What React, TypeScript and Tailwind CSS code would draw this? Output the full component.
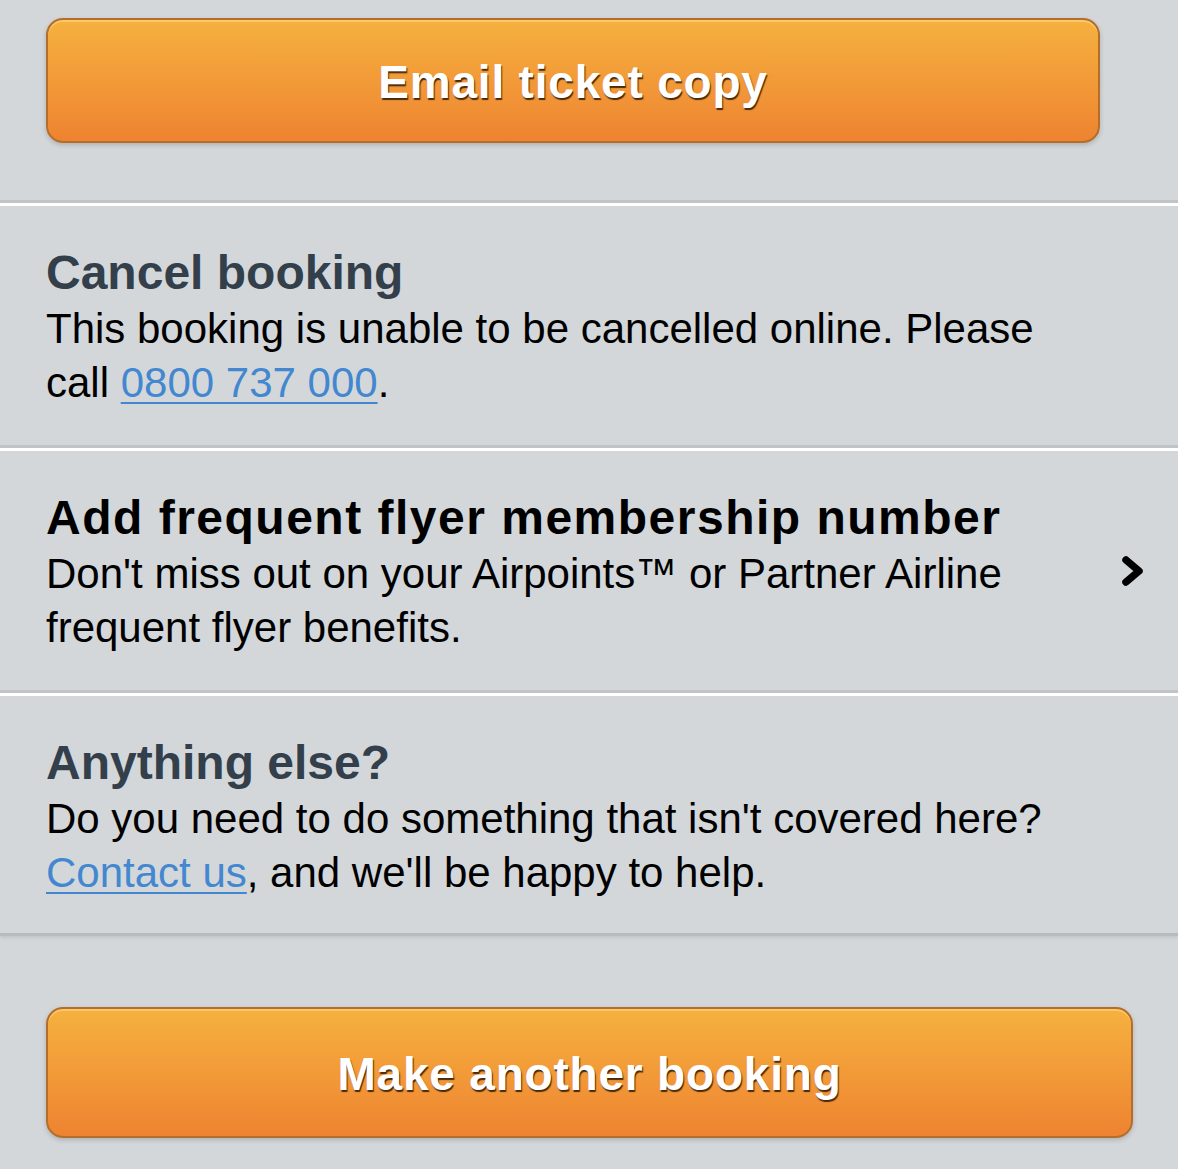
import React from "react";

function OrangeButton({ label, className }: { label: string; className: string }) {
  return (
    <button
      className={`${className} flex items-center justify-center rounded-[17px] border-2 border-[#b46e2b] bg-gradient-to-b from-[#f5b13f] to-[#ee8331] shadow-[inset_0_2px_0_rgba(255,220,140,0.55),0_2px_5px_rgba(0,0,0,0.18)] text-white font-bold text-[46px] tracking-[0.8px] pt-[3px] [text-shadow:1px_2px_1px_rgba(30,15,0,0.8)]`}
    >
      {label}
    </button>
  );
}

export default function App() {
  return (
    <div className="min-h-[1169px] w-full bg-[#d3d7da] font-['Liberation_Sans',Arial,sans-serif] overflow-hidden">
      <div className="h-[203px] pt-[18px] border-b-[3px] border-[#c0c4c7]">
        <OrangeButton label="Email ticket copy" className="ml-[46px] w-[1054px] h-[125px]" />
      </div>

      <section className="border-t-[3px] border-white border-b-[3px] border-b-[#c0c4c7] pt-[38px] pb-[35px] pl-[46px] pr-[90px]">
        <h2 className="text-[48px] leading-[58px] font-bold text-[#333f4a]">Cancel booking</h2>
        <p className="text-[42px] leading-[54px] text-black">
          This booking is unable to be cancelled online. Please call{" "}
          <a href="#" className="text-[#4287cf] underline decoration-[2px] underline-offset-[5px]">0800 737 000</a>.
        </p>
      </section>

      <section className="border-t-[3px] border-white border-b-[3px] border-b-[#c0c4c7] pt-[38px] pb-[35px] pl-[46px] pr-[30px] flex items-center">
        <div className="flex-1">
          <h2 className="text-[48px] leading-[58px] font-bold text-black tracking-[1.5px]">Add frequent flyer membership number</h2>
          <p className="text-[42px] leading-[54px] text-black pr-[80px]">
            Don't miss out on your Airpoints™ or Partner Airline frequent flyer benefits.
          </p>
        </div>
        <svg width="30" height="38" viewBox="0 0 30 38" className="-mt-[3px]">
          <polyline points="8,8 21,19 8,30" fill="none" stroke="#000" strokeWidth="7.5" strokeLinecap="round" strokeLinejoin="round" />
        </svg>
      </section>

      <section className="border-t-[3px] border-white border-b-[3px] border-b-[#b8bcbf] shadow-[0_2px_3px_rgba(0,0,0,0.08)] pt-[38px] pb-[33px] pl-[46px] pr-[90px]">
        <h2 className="text-[48px] leading-[58px] font-bold text-[#333f4a]">Anything else?</h2>
        <p className="text-[42px] leading-[54px] text-black">
          Do you need to do something that isn't covered here?{" "}
          <a href="#" className="text-[#4287cf] underline decoration-[2px] underline-offset-[5px]">Contact us</a>, and we'll be happy to help.
        </p>
      </section>

      <div className="pt-[71px] pb-[30px]">
        <OrangeButton label="Make another booking" className="ml-[46px] w-[1087px] h-[131px]" />
      </div>
    </div>
  );
}
